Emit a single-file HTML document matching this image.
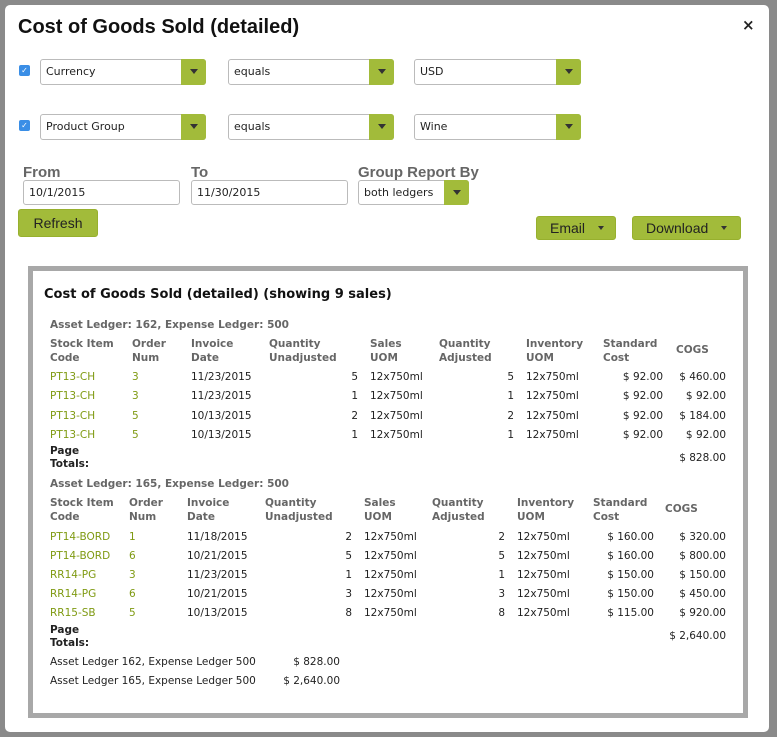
<!DOCTYPE html>
<html><head><meta charset="utf-8"><style>
*{margin:0;padding:0;box-sizing:border-box}
body{width:777px;height:737px;background:#8a8a8a;position:relative;overflow:hidden;font-family:"DejaVu Sans","Liberation Sans",sans-serif;font-size:10.5px;color:#222}
.modal{position:absolute;left:5px;top:5px;width:764px;height:727px;background:#fff;border-radius:5px}
.a{position:absolute;line-height:14px;white-space:nowrap}
.r{text-align:right}
.h{color:#666;font-weight:bold}
.g{color:#7f9a12}
.b{font-weight:bold;color:#222}
.sel{position:absolute;height:26px;border:1px solid #bbb;border-radius:3px;background:#fff;font-size:11px;line-height:24px;padding-left:5px;color:#222}
.sel .btn{position:absolute;right:-1px;top:-1px;width:25px;height:26px;background:#a2bb3a;border-radius:0 3px 3px 0}
.tri{position:absolute;width:0;height:0;border-left:4px solid transparent;border-right:4px solid transparent;border-top:5px solid #333}
.sel .tri{left:9px;top:10px}
.inp{position:absolute;height:25px;border:1px solid #bbb;border-radius:3px;font-size:11px;line-height:23px;padding-left:5px}
.gb{position:absolute;background:#a2bb3a;border:1px solid #97b02e;border-radius:3px;font-family:"Liberation Sans",sans-serif;font-size:14px;color:#222;text-align:center}
.lbl{position:absolute;font-family:"Liberation Sans",sans-serif;font-weight:bold;font-size:15px;color:#666}
.cb{position:absolute;width:11px;height:11px;background:#3a8ee6;border-radius:2px;color:#fff;font-size:8px;line-height:11px;text-align:center}
.rep{position:absolute;left:28px;top:266px;width:720px;height:452px;border:5px solid #a8a8a8;background:#fff}
</style></head><body>
<div class="modal"></div>
<div class="a" style="left:18px;top:14px;font-family:'Liberation Sans',sans-serif;font-weight:bold;font-size:20px;line-height:26px;color:#111">Cost of Goods Sold (detailed)</div>
<div class="a" style="left:742px;top:17px;font-size:15px;font-weight:bold;line-height:16px">×</div>

<div class="cb" style="left:19px;top:65px">✓</div>
<div class="sel" style="left:40px;top:59px;width:166px">Currency<div class="btn"><div class="tri"></div></div></div>
<div class="sel" style="left:228px;top:59px;width:166px">equals<div class="btn"><div class="tri"></div></div></div>
<div class="sel" style="left:414px;top:59px;width:167px">USD<div class="btn"><div class="tri"></div></div></div>
<div class="cb" style="left:19px;top:120px">✓</div>
<div class="sel" style="left:40px;top:114px;width:166px">Product Group<div class="btn"><div class="tri"></div></div></div>
<div class="sel" style="left:228px;top:114px;width:166px">equals<div class="btn"><div class="tri"></div></div></div>
<div class="sel" style="left:414px;top:114px;width:167px">Wine<div class="btn"><div class="tri"></div></div></div>

<div class="lbl" style="left:23px;top:164px">From</div>
<div class="lbl" style="left:191px;top:164px">To</div>
<div class="lbl" style="left:358px;top:164px">Group Report By</div>
<div class="inp" style="left:23px;top:180px;width:157px">10/1/2015</div>
<div class="inp" style="left:191px;top:180px;width:157px">11/30/2015</div>
<div class="sel" style="left:358px;top:180px;width:111px;height:25px;line-height:23px">both ledgers<div class="btn" style="height:25px"><div class="tri"></div></div></div>
<div class="gb" style="left:18px;top:209px;width:80px;height:28px;line-height:26px">Refresh</div>
<div class="gb" style="left:536px;top:216px;width:80px;height:24px;line-height:22px;text-align:left;padding-left:13px">Email<div class="tri" style="left:61px;top:9px;border-left-width:3px;border-right-width:3px;border-top-width:4px"></div></div>
<div class="gb" style="left:632px;top:216px;width:109px;height:24px;line-height:22px;text-align:left;padding-left:13px">Download<div class="tri" style="left:88px;top:9px;border-left-width:3px;border-right-width:3px;border-top-width:4px"></div></div>

<div class="rep"></div>
<div class="a" style="left:44px;top:287px;font-weight:bold;font-size:13px;line-height:16px;color:#111">Cost of Goods Sold (detailed) (showing 9 sales)</div>

<div class="a h" style="left:50px;top:318px">Asset Ledger: 162, Expense Ledger: 500</div>
<div class="a h" style="left:50px;top:337px">Stock Item<br>Code</div>
<div class="a h" style="left:132px;top:337px">Order<br>Num</div>
<div class="a h" style="left:191px;top:337px">Invoice<br>Date</div>
<div class="a h" style="left:269px;top:337px">Quantity<br>Unadjusted</div>
<div class="a h" style="left:370px;top:337px">Sales<br>UOM</div>
<div class="a h" style="left:439px;top:337px">Quantity<br>Adjusted</div>
<div class="a h" style="left:526px;top:337px">Inventory<br>UOM</div>
<div class="a h" style="left:603px;top:337px">Standard<br>Cost</div>
<div class="a h" style="left:676px;top:343px">COGS</div>

<div class="a g" style="left:50px;top:368px;line-height:19.3px">PT13-CH<br>PT13-CH<br>PT13-CH<br>PT13-CH</div>
<div class="a g" style="left:132px;top:368px;line-height:19.3px">3<br>3<br>5<br>5</div>
<div class="a" style="left:191px;top:368px;line-height:19.3px">11/23/2015<br>11/23/2015<br>10/13/2015<br>10/13/2015</div>
<div class="a r" style="right:419px;top:368px;line-height:19.3px">5<br>1<br>2<br>1</div>
<div class="a" style="left:370px;top:368px;line-height:19.3px">12x750ml<br>12x750ml<br>12x750ml<br>12x750ml</div>
<div class="a r" style="right:263px;top:368px;line-height:19.3px">5<br>1<br>2<br>1</div>
<div class="a" style="left:526px;top:368px;line-height:19.3px">12x750ml<br>12x750ml<br>12x750ml<br>12x750ml</div>
<div class="a r" style="right:114px;top:368px;line-height:19.3px">$ 92.00<br>$ 92.00<br>$ 92.00<br>$ 92.00</div>
<div class="a r" style="right:51px;top:368px;line-height:19.3px">$ 460.00<br>$ 92.00<br>$ 184.00<br>$ 92.00</div>
<div class="a b" style="left:50px;top:445px;line-height:13px;font-weight:bold">Page<br>Totals:</div>
<div class="a r" style="right:51px;top:451px">$ 828.00</div>

<div class="a h" style="left:50px;top:477px">Asset Ledger: 165, Expense Ledger: 500</div>
<div class="a h" style="left:50px;top:496px">Stock Item<br>Code</div>
<div class="a h" style="left:129px;top:496px">Order<br>Num</div>
<div class="a h" style="left:187px;top:496px">Invoice<br>Date</div>
<div class="a h" style="left:265px;top:496px">Quantity<br>Unadjusted</div>
<div class="a h" style="left:364px;top:496px">Sales<br>UOM</div>
<div class="a h" style="left:432px;top:496px">Quantity<br>Adjusted</div>
<div class="a h" style="left:517px;top:496px">Inventory<br>UOM</div>
<div class="a h" style="left:593px;top:496px">Standard<br>Cost</div>
<div class="a h" style="left:665px;top:502px">COGS</div>

<div class="a g" style="left:50px;top:528px;line-height:19.1px">PT14-BORD<br>PT14-BORD<br>RR14-PG<br>RR14-PG<br>RR15-SB</div>
<div class="a g" style="left:129px;top:528px;line-height:19.1px">1<br>6<br>3<br>6<br>5</div>
<div class="a" style="left:187px;top:528px;line-height:19.1px">11/18/2015<br>10/21/2015<br>11/23/2015<br>10/21/2015<br>10/13/2015</div>
<div class="a r" style="right:425px;top:528px;line-height:19.1px">2<br>5<br>1<br>3<br>8</div>
<div class="a" style="left:364px;top:528px;line-height:19.1px">12x750ml<br>12x750ml<br>12x750ml<br>12x750ml<br>12x750ml</div>
<div class="a r" style="right:272px;top:528px;line-height:19.1px">2<br>5<br>1<br>3<br>8</div>
<div class="a" style="left:517px;top:528px;line-height:19.1px">12x750ml<br>12x750ml<br>12x750ml<br>12x750ml<br>12x750ml</div>
<div class="a r" style="right:123px;top:528px;line-height:19.1px">$ 160.00<br>$ 160.00<br>$ 150.00<br>$ 150.00<br>$ 115.00</div>
<div class="a r" style="right:51px;top:528px;line-height:19.1px">$ 320.00<br>$ 800.00<br>$ 150.00<br>$ 450.00<br>$ 920.00</div>
<div class="a b" style="left:50px;top:624px;line-height:13px;font-weight:bold">Page<br>Totals:</div>
<div class="a r" style="right:51px;top:629px">$ 2,640.00</div>

<div class="a" style="left:50px;top:655px">Asset Ledger 162, Expense Ledger 500</div>
<div class="a r" style="right:437px;top:655px">$ 828.00</div>
<div class="a" style="left:50px;top:674px">Asset Ledger 165, Expense Ledger 500</div>
<div class="a r" style="right:437px;top:674px">$ 2,640.00</div>
</body></html>
